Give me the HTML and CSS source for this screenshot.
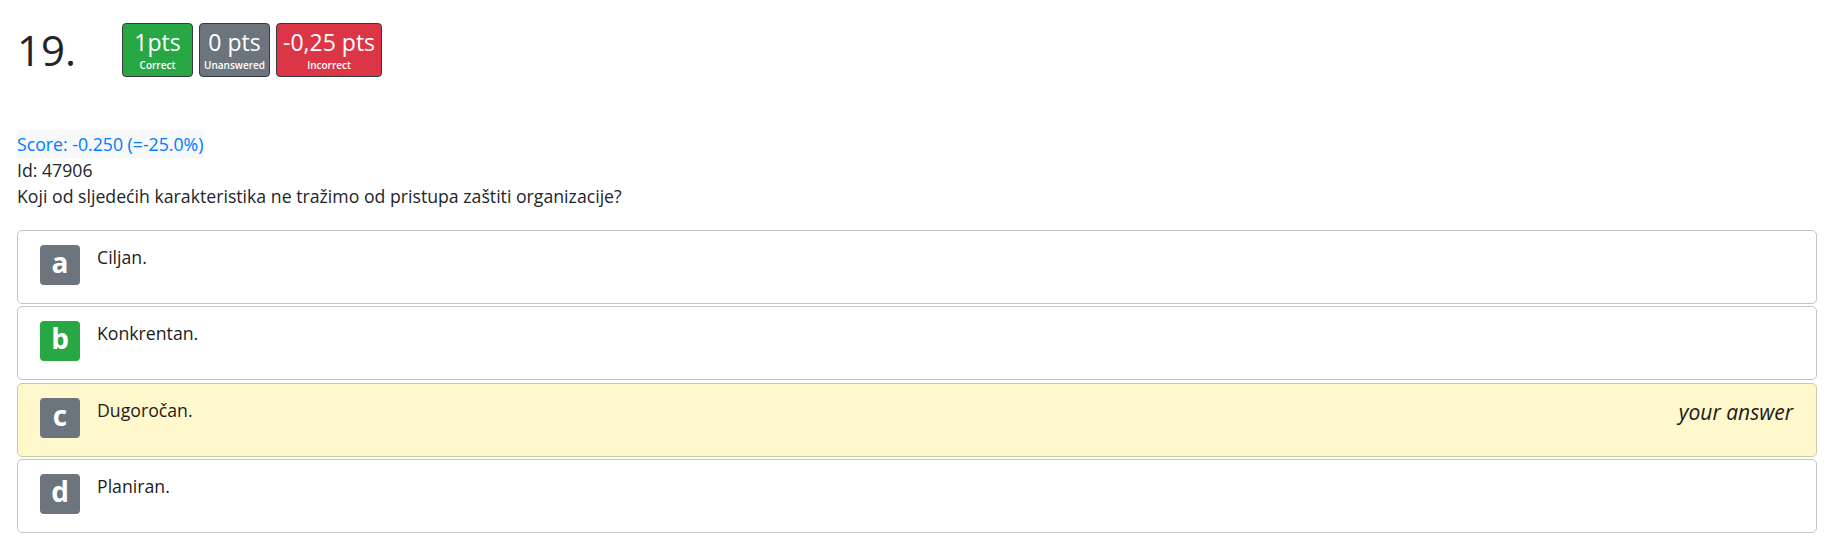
FILE: index.html
```
<!DOCTYPE html>
<html lang="hr">
<head>
<meta charset="utf-8">
<title>Pitanje 19</title>
<link rel="stylesheet" href="styles.css">
</head>
<body>
<div class="page">
  <div class="head">
    <h1 class="qnum">19.</h1>
    <div class="pts-group">
      <div class="pts pts-correct"><div class="pts-val">1pts</div><div class="pts-lbl">Correct</div></div>
      <div class="pts pts-none"><div class="pts-val">0 pts</div><div class="pts-lbl">Unanswered</div></div>
      <div class="pts pts-wrong"><div class="pts-val">-0,25 pts</div><div class="pts-lbl">Incorrect</div></div>
    </div>
  </div>
  <div class="meta">
    <span class="score">Score: -0.250 (=-25.0%)</span>
    <div class="line">Id: 47906</div>
    <div class="line">Koji od sljedećih karakteristika ne tražimo od pristupa zaštiti organizacije?</div>
  </div>
  <div class="options">
    <div class="opt"><span class="letter">a</span><span class="opt-text">Ciljan.</span></div>
    <div class="opt"><span class="letter letter-ok">b</span><span class="opt-text">Konkrentan.</span></div>
    <div class="opt opt-mine"><span class="letter">c</span><span class="opt-text">Dugoročan.</span><span class="mine">your answer</span></div>
    <div class="opt"><span class="letter">d</span><span class="opt-text">Planiran.</span></div>
  </div>
</div>
</body>
</html>
```
FILE: styles.css
```
html, body { margin: 0; padding: 0; background: #fff; }
body {
  font-family: "Open Sans", "Noto Sans", sans-serif;
  font-size: 17.7px;
  line-height: 25.5px;
  color: #212529;
}
.page { padding: 23px 23px 0 17px; }

.head { display: flex; align-items: center; height: 54px; }
.qnum {
  margin: 0;
  width: 105px;
  font-size: 42px;
  font-weight: 400;
  line-height: 54px;
  color: #212529;
}
.pts-group { display: flex; gap: 6px; }
.pts {
  box-sizing: border-box;
  min-width: 71px;
  height: 54px;
  padding: 5px 4px 2px;
  border: 1px solid #343a40;
  border-radius: 4px;
  color: #fff;
  text-align: center;
  white-space: nowrap;
}
.pts-val { font-size: 23px; line-height: 27px; }
.pts-lbl { font-size: 10px; line-height: 18px; font-weight: 600; }
.pts-correct { background: #28a745; }
.pts-none { background: #6c757d; }
.pts-wrong { background: #dc3545; padding-left: 6px; padding-right: 6px; }

.meta { margin-top: 53px; }
.score {
  display: inline-block;
  line-height: 28px;
  color: #007bff;
  background: #f6f8fa;
  vertical-align: top;
}
.line { line-height: 25.5px; }

.options { margin-top: 21px; display: flex; flex-direction: column; gap: 2.4px; }
.opt {
  box-sizing: border-box;
  height: 74px;
  display: flex;
  align-items: flex-start;
  padding: 14px 23px 0 22px;
  border: 1px solid #c4c4c4;
  border-radius: 5px;
  background: #fff;
}
.opt-mine { background: #fff8cd; border-color: #cfc9a6; }
.letter {
  flex: none;
  width: 40px;
  height: 40px;
  border-radius: 4px;
  background: #6c757d;
  color: #fff;
  font-weight: 700;
  font-size: 28px;
  line-height: 34px;
  text-align: center;
}
.letter-ok { background: #28a745; }
.opt-text { flex: 1; margin-left: 17px; line-height: 25.5px; color: #1c1c1c; }
.mine {
  font-style: italic;
  font-size: 21px;
  line-height: 28px;
  color: #1a1a1a;
}
```
